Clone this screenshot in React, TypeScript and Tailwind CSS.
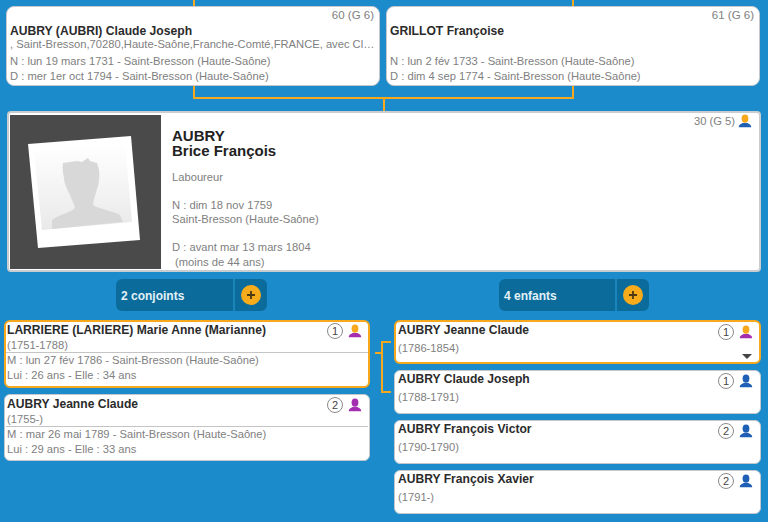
import React from 'react';

const PersonIcon = ({ head, body }: { head: string; body: string }) => (
  <svg width="14" height="14" viewBox="0 0 14 14" className="shrink-0">
    <path d="M.8 13.2c0-2.8 2.2-3.2 4-4.2h4.4c1.8 1 4 1.4 4 4.2z" fill={body} />
    <ellipse cx="7" cy="4.6" rx="3.4" ry="4.2" fill={head} />
  </svg>
);

const RankBadge = ({ n }: { n: number }) => (
  <span className="flex h-[16px] w-[16px] shrink-0 items-center justify-center rounded-full border-[1.5px] border-[#8a8a8a] bg-white text-[11px] leading-none text-[#444]">
    {n}
  </span>
);

const PlusButton = ({ label, width }: { label: string; width: string }) => (
  <div className={`flex h-[32px] ${width} items-stretch rounded-[6px] bg-[#0b6c9c]`}>
    <div className="flex flex-1 items-center border-r-2 border-[#1a85bb] pl-[5px] pt-[1px] text-[12px] font-bold text-[#e3f1f8]">{label}</div>
    <div className="flex w-[32px] items-center justify-center">
      <span className="flex h-[20px] w-[20px] items-center justify-center rounded-full bg-[#f9ac1b]">
        <svg width="10" height="10" viewBox="0 0 10 10">
          <path d="M5 1v8M1 5h8" stroke="#4b3a12" strokeWidth="1.8" />
        </svg>
      </span>
    </div>
  </div>
);

const Ancestor = ({ num, name, place, birth, death }: { num: string; name: string; place?: string; birth: string; death: string }) => (
  <div className="flex h-[80px] w-[374px] flex-col rounded-[8px] border border-[#c4c8cc] bg-white pl-[3px] pr-[5px] pt-[2px] text-[#808080]">
    <div className="h-[13px] text-right text-[11.5px] leading-[13px]">{num}</div>
    <div className="mt-[2px] h-[14px] text-[12.15px] font-bold leading-[14px] text-[#2b2b2b]">{name}</div>
    <div className="-mr-[3px] mt-[-1px] h-[14px] truncate text-[11.2px] leading-[14px]">{place}</div>
    <div className="mt-[3px] text-[11.2px] leading-[15px]">{birth}</div>
    <div className="text-[11.2px] leading-[15px]">{death}</div>
  </div>
);

const Spouse = ({ n, name, years, m, ages, head, body, active }: { n: number; name: string; years: string; m: string; ages: string; head: string; body: string; active?: boolean }) => (
  <div className={`flex flex-col rounded-[6px] bg-white text-[#808080] ${active ? 'h-[68px] border-2 border-[#f7a81c]' : 'h-[67px] border border-[#c4c8cc] px-px'}`}>
    <div className={`flex items-start pl-[1px] pr-[6px] ${active ? 'h-[30px]' : 'h-[31px] pt-px'}`}>
      <div className="flex-1">
        <div className="text-[12.1px] font-bold leading-[16px] text-[#2b2b2b]">{name}</div>
        <div className="text-[11.2px] leading-[14px]">{years}</div>
      </div>
      <div className="mt-[1px] flex items-center gap-[5px]">
        <RankBadge n={n} />
        <PersonIcon head={head} body={body} />
      </div>
    </div>
    <div className="border-t border-[#c4c4c4] pl-[1px] text-[11.2px] leading-[15px]">
      <div>{m}</div>
      <div>{ages}</div>
    </div>
  </div>
);

const Child = ({ n, name, years, head, body, active }: { n: number; name: string; years: string; head: string; body: string; active?: boolean }) => (
  <div className={`relative flex h-[44px] items-start rounded-[6px] bg-white ${active ? 'border-2 border-[#f7a81c]' : 'border border-[#c4c8cc] px-px'}`}>
    <div className="flex-1 pl-[2px]">
      <div className="text-[12.1px] font-bold leading-[16px] text-[#2b2b2b]">{name}</div>
      <div className="mt-[3px] text-[11.2px] leading-[14px] text-[#808080]">{years}</div>
    </div>
    <div className="mr-[6px] mt-[2px] flex items-center gap-[5px]">
      <RankBadge n={n} />
      <PersonIcon head={head} body={body} />
    </div>
    {active && <span className="absolute bottom-[3px] right-[7px] h-0 w-0 border-x-[5px] border-t-[5px] border-x-transparent border-t-[#444]" />}
  </div>
);

const Portrait = () => (
  <div className="h-[154px] w-[151px] shrink-0 bg-[#4a4a4a]">
    <svg width="151" height="154" viewBox="0 0 151 154">
      <defs>
        <linearGradient id="paper" x1="0" y1="0" x2="0" y2="1">
          <stop offset="0" stopColor="#ffffff" />
          <stop offset="1" stopColor="#e9e9e9" />
        </linearGradient>
      </defs>
      <polygon points="18,29 121,21 130,125 28,133" fill="#fff" />
      <polygon points="24,36 115,29 122,107 32,115" fill="url(#paper)" />
      <path d="M53 48l14-2 5 1 6-4 2 3 7 2c2 5 3 11 2 17c-1 9-5 16-6 25c6 4 20 6 27 10l3 7-71 7 0-9c6-5 20-8 23-12c-1-5-4-9-5-13c-3-6-6-12-6-17c-1-5-2-10-1-15z" fill="#d8d8d8" />
    </svg>
  </div>
);

export default function App() {
  return (
    <div className="h-[522px] w-[768px] overflow-hidden bg-[#1c8bcb] font-['Liberation_Sans',Arial,sans-serif]">
      <div className="flex h-[6px] pl-[193px]">
        <div className="h-full w-[2px] bg-[#f7a81c]" />
        <div className="ml-[377px] h-full w-[2px] bg-[#f7a81c]" />
      </div>

      <div className="flex gap-[6px] pl-[6px]">
        <Ancestor
          num="60 (G 6)"
          name="AUBRY (AUBRI) Claude Joseph"
          place=", Saint-Bresson,70280,Haute-Saône,Franche-Comté,FRANCE, avec Claude Joseph"
          birth="N : lun 19 mars 1731 - Saint-Bresson (Haute-Saône)"
          death="D : mer 1er oct 1794 - Saint-Bresson (Haute-Saône)"
        />
        <Ancestor
          num="61 (G 6)"
          name="GRILLOT Françoise"
          birth="N : lun 2 fév 1733 - Saint-Bresson (Haute-Saône)"
          death="D : dim 4 sep 1774 - Saint-Bresson (Haute-Saône)"
        />
      </div>

      <div className="ml-[193px] h-[13px] w-[381px] border-x-2 border-b-2 border-[#f7a81c]" />
      <div className="ml-[383px] h-[12px] w-[2px] bg-[#f7a81c]" />

      <div className="ml-[7px] flex h-[161px] w-[754px] rounded-[4px] border-2 border-[#c9cdd0] bg-white py-[2px] pl-px pr-[2px] text-[11.2px] leading-[14px] text-[#808080]">
        <Portrait />
        <div className="flex-1 pl-[11px] pt-[13px]">
          <div className="text-[15px] font-bold leading-[15px] text-[#222]">
            AUBRY
            <br />
            Brice François
          </div>
          <div className="mt-[12px]">Laboureur</div>
          <div className="mt-[14px]">N : dim 18 nov 1759</div>
          <div>Saint-Bresson (Haute-Saône)</div>
          <div className="mt-[14px]">D : avant mar 13 mars 1804</div>
          <div className="pl-[3px] pt-px">(moins de 44 ans)</div>
        </div>
        <div className="-mt-px flex h-[14px] items-center gap-[3px] pr-[5px]">
          <span>30 (G 5)</span>
          <PersonIcon head="#f7a81c" body="#1f5fb5" />
        </div>
      </div>

      <div className="mt-[7px] flex h-[32px]">
        <div className="ml-[116px]">
          <PlusButton label="2 conjoints" width="w-[151px]" />
        </div>
        <div className="ml-[232px]">
          <PlusButton label="4 enfants" width="w-[150px]" />
        </div>
      </div>

      <div className="mt-[9px] flex pl-[4px]">
        <div className="flex w-[366px] flex-col gap-[6px]">
          <Spouse n={1} name="LARRIERE (LARIERE) Marie Anne (Marianne)" years="(1751-1788)" m="M : lun 27 fév 1786 - Saint-Bresson (Haute-Saône)" ages="Lui : 26 ans - Elle : 34 ans" head="#f7a81c" body="#a32fb0" active />
          <Spouse n={2} name="AUBRY Jeanne Claude" years="(1755-)" m="M : mar 26 mai 1789 - Saint-Bresson (Haute-Saône)" ages="Lui : 29 ans - Elle : 33 ans" head="#a32fb0" body="#a32fb0" />
        </div>

        <div className="flex w-[24px] flex-col pl-[5px] pt-[21px]">
          <div className="flex h-[52px]">
            <div className="mt-[11px] h-[2px] w-[6px] bg-[#f7a81c]" />
            <div className="h-[52px] w-[10px] rounded-none border-y-2 border-l-2 border-[#f7a81c]" />
          </div>
        </div>

        <div className="flex w-[367px] flex-col gap-[6px]">
          <Child n={1} name="AUBRY Jeanne Claude" years="(1786-1854)" head="#f7a81c" body="#a32fb0" active />
          <Child n={1} name="AUBRY Claude Joseph" years="(1788-1791)" head="#1f5fb5" body="#1f5fb5" />
          <Child n={2} name="AUBRY François Victor" years="(1790-1790)" head="#1f5fb5" body="#1f5fb5" />
          <Child n={2} name="AUBRY François Xavier" years="(1791-)" head="#1f5fb5" body="#1f5fb5" />
        </div>
      </div>
    </div>
  );
}
